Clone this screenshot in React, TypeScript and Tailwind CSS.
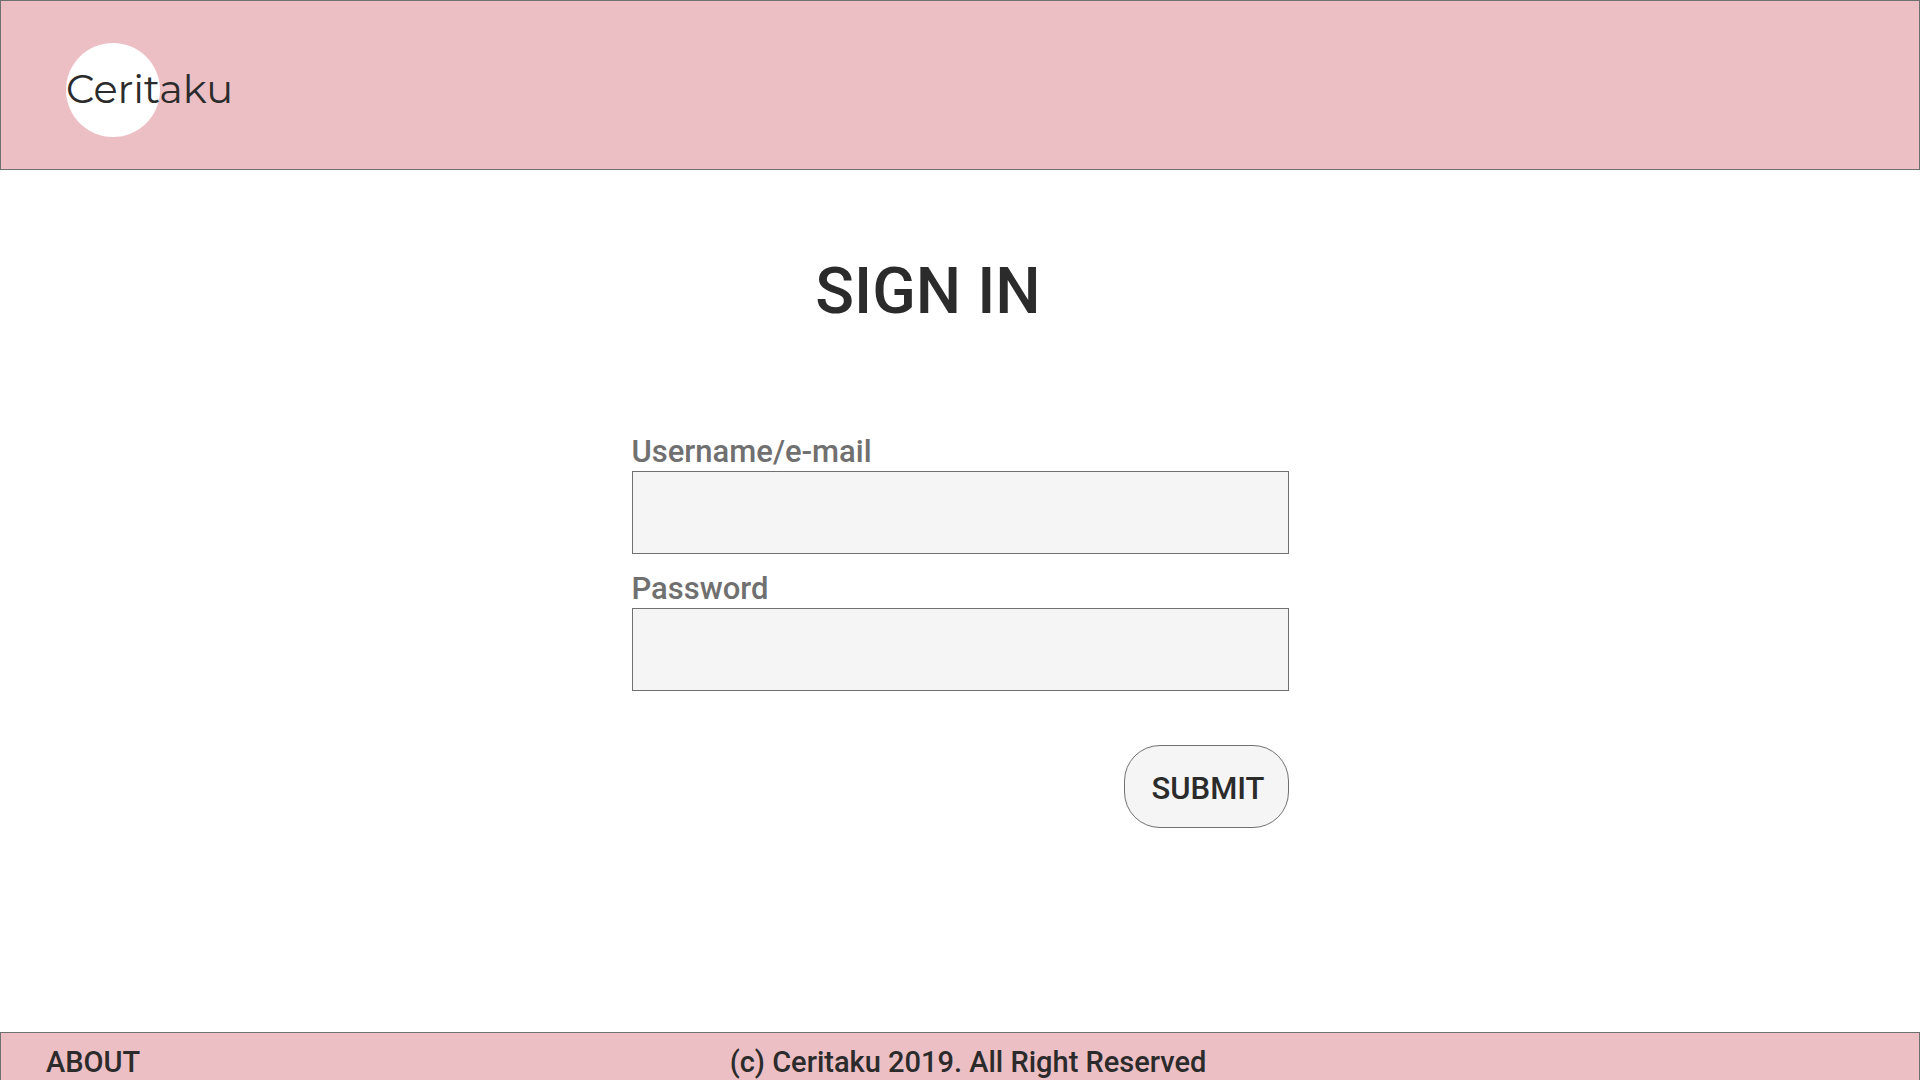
import type { ReactNode } from 'react';

function Field({ id, label, type }: { id: string; label: string; type: string }): ReactNode {
  return (
    <div className="flex flex-col">
      <label htmlFor={id} className="text-[31px] leading-[38px] font-medium text-[#707070]">
        {label}
      </label>
      <input id={id} type={type} className="h-[83px] w-full border border-[#707070] bg-[#f5f5f5] px-6 text-3xl text-[#2b2b2b] outline-none" />
    </div>
  );
}

export default function App() {
  return (
    <div className="flex min-h-screen flex-col bg-white font-[Roboto,sans-serif] text-[#2b2b2b]">
      <header className="flex h-[170px] items-center border border-[#707070] bg-[#ecbfc5] px-[65px] pt-[10px]">
        <a href="#" className="flex size-[94px] items-center rounded-full bg-white pb-0.5 font-['Montserrat','Inter',sans-serif] text-[40px] leading-none">
          Ceritaku
        </a>
      </header>
      <main className="flex flex-1 flex-col items-center pt-[84px]">
        <h1 className="mr-16 text-[64px] leading-[76px] font-medium">SIGN IN</h1>
        <form className="mt-[103px] flex w-full max-w-[657px] flex-col gap-4" onSubmit={(e) => e.preventDefault()}>
          <Field id="username" label="Username/e-mail" type="text" />
          <Field id="password" label="Password" type="password" />
          <button type="submit" className="mt-[38px] h-[83px] w-[165px] self-end rounded-[36px] border border-[#707070] bg-[#f5f5f5] pt-[6px] pl-1 text-[31px] font-medium">
            SUBMIT
          </button>
        </form>
      </main>
      <footer className="grid h-12 grid-cols-[1fr_auto_1fr] border border-b-0 border-[#707070] bg-[#ecbfc5] pt-[11px] text-[29px] leading-9 font-medium">
        <a href="#about" className="justify-self-start pl-[45px]">ABOUT</a>
        <p className="pl-4">(c) Ceritaku 2019. All Right Reserved</p>
      </footer>
    </div>
  );
}
